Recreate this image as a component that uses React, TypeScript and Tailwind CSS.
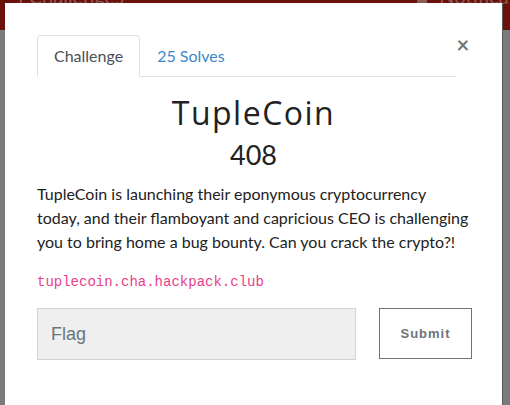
import React from 'react';

export default function App() {
  return (
    <div className="relative w-[510px] h-[405px] overflow-hidden bg-[#7b7b7b] font-['Lato','Liberation_Sans',sans-serif]">
      {/* dimmed navbar behind the modal */}
      <div className="h-[30px] bg-[#6b110b] flex justify-between px-[18px] text-[#8c5a55] text-[20px] leading-none">
        <span className="-mt-[14px]">I Challenges</span>
        <span className="-mt-[14px] mr-[-60px] flex items-start gap-3">
          <span className="w-[10px] h-[14px] bg-[#8c5a55] mt-[4px]" />
          Notifications
        </span>
      </div>

      <div className="absolute left-[5px] top-[3px] w-[498px] h-[420px] bg-white border-r border-[#5a5a5a] pl-[32px] pr-[30px] pt-[32px]">
        <div className="flex items-start pr-[2px]">
          <div className="flex flex-1 border-b border-[#dee2e6] h-[42px]">
            <div className="h-[42px] px-[16px] border border-[#dee2e6] border-b-white rounded-t-[4px] bg-white text-[#495057] text-[16px] flex items-center -mb-px">
              Challenge
            </div>
            <div className="h-[42px] px-[17px] text-[#3d89c9] text-[16px] flex items-center">
              25 Solves
            </div>
          </div>
          <button className="w-[14px] -mt-[1px] text-[#777] text-[22px] font-bold leading-none">×</button>
        </div>

        <h1 className="text-center text-[#222] text-[32px] tracking-[1.5px] font-['Open_Sans',sans-serif] leading-none mt-[20px] pr-[2px]">
          TupleCoin
        </h1>
        <div className="text-center text-[#222] text-[27px] leading-none mt-[12px] pr-[2px]">408</div>

        <p className="mt-[14px] text-[#222] text-[16px] leading-[24px] pr-[2px]">
          TupleCoin is launching their eponymous cryptocurrency today, and their flamboyant and capricious CEO is challenging you to bring home a bug bounty. Can you crack the crypto?!
        </p>

        <div className="mt-[21px] font-['Liberation_Mono',monospace] text-[14px] text-[#e83e8c] leading-none">
          tuplecoin.cha.hackpack.club
        </div>

        <div className="flex items-start mt-[19px]">
          <input
            placeholder="Flag"
            className="w-[319px] shrink-0 h-[52px] bg-[#efefef] border border-[#ccd3db] px-[13px] text-[18px] font-['Liberation_Sans',sans-serif] placeholder:text-[#6c757d] outline-none"
          />
          <button className="ml-[23px] shrink-0 w-[93px] h-[51px] border border-[#6c757d] bg-white text-[#6c757d] text-[13px] font-bold tracking-[1px] font-['Liberation_Sans',sans-serif]">
            Submit
          </button>
        </div>
      </div>
    </div>
  );
}
